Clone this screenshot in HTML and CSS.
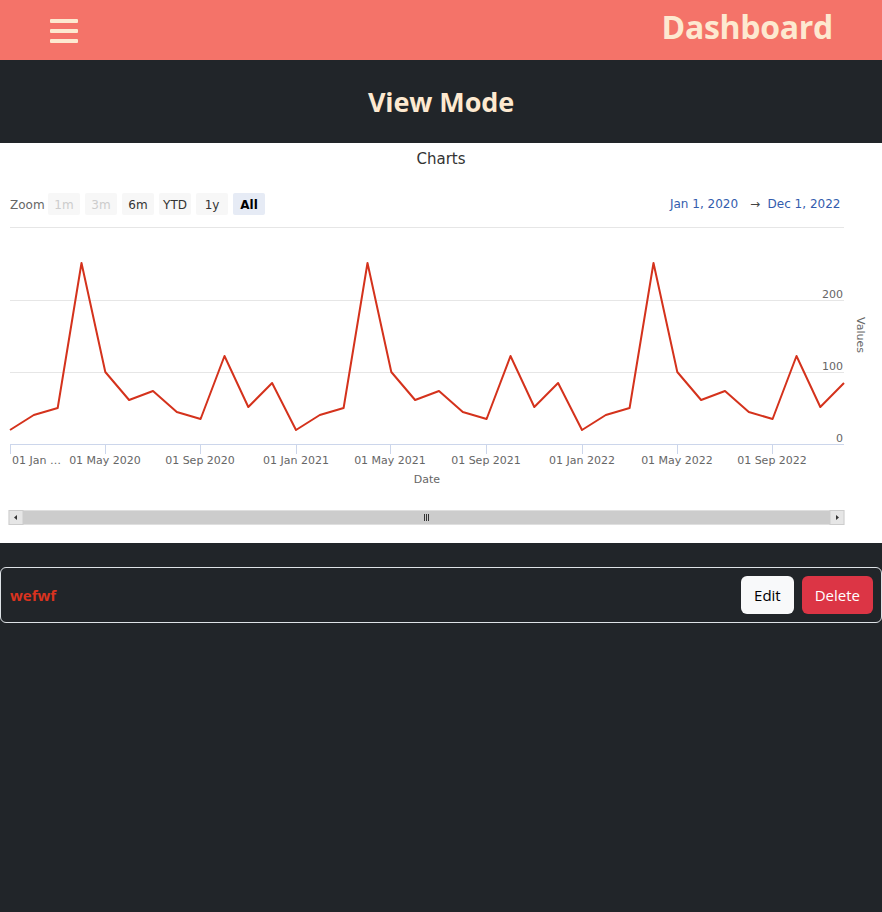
FILE: index.html
```html
<!DOCTYPE html>
<html lang="en">
<head>
<meta charset="utf-8">
<title>Dashboard</title>
<link rel="stylesheet" href="styles.css">
</head>
<body>
<header class="topbar">
  <button class="menu-btn" aria-label="Menu">
    <span class="bar"></span><span class="bar"></span><span class="bar"></span>
  </button>
  <h1 class="brand">Dashboard</h1>
</header>
<section class="mode-band">
  <h2 class="mode-title">View Mode</h2>
</section>
<section class="chart-card">
  <svg class="chart" width="882" height="400" viewBox="0 0 882 400" xmlns="http://www.w3.org/2000/svg">
    <text class="c-title" x="441" y="21" text-anchor="middle">Charts</text>
    <text class="c-zoom" x="10" y="66">Zoom</text>
    <g class="rs-btn disabled"><rect x="48" y="50" width="32" height="22" rx="2"/><text x="64" y="66" text-anchor="middle">1m</text></g>
    <g class="rs-btn disabled"><rect x="85" y="50" width="32" height="22" rx="2"/><text x="101" y="66" text-anchor="middle">3m</text></g>
    <g class="rs-btn"><rect x="122" y="50" width="32" height="22" rx="2"/><text x="138" y="66" text-anchor="middle">6m</text></g>
    <g class="rs-btn"><rect x="159" y="50" width="32" height="22" rx="2"/><text x="175" y="66" text-anchor="middle">YTD</text></g>
    <g class="rs-btn"><rect x="196" y="50" width="32" height="22" rx="2"/><text x="212" y="66" text-anchor="middle">1y</text></g>
    <g class="rs-btn active"><rect x="233" y="50" width="32" height="22" rx="2"/><text x="249" y="66" text-anchor="middle">All</text></g>
    <text class="c-date" x="704" y="65" text-anchor="middle">Jan 1, 2020</text>
    <text class="c-arrow" x="755" y="65" text-anchor="middle">→</text>
    <text class="c-date" x="804" y="65" text-anchor="middle">Dec 1, 2022</text>
    <g class="grid">
      <line x1="10" y1="84.5" x2="844" y2="84.5"/>
      <line x1="10" y1="157.5" x2="844" y2="157.5"/>
      <line x1="10" y1="229.5" x2="844" y2="229.5"/>
    </g>
    <g class="axis">
      <line x1="10" y1="301.5" x2="844" y2="301.5"/>
      <line x1="10.5" y1="301" x2="10.5" y2="311"/>
      <line x1="105.5" y1="301" x2="105.5" y2="311"/>
      <line x1="200.5" y1="301" x2="200.5" y2="311"/>
      <line x1="296.5" y1="301" x2="296.5" y2="311"/>
      <line x1="390.5" y1="301" x2="390.5" y2="311"/>
      <line x1="486.5" y1="301" x2="486.5" y2="311"/>
      <line x1="582.5" y1="301" x2="582.5" y2="311"/>
      <line x1="677.5" y1="301" x2="677.5" y2="311"/>
      <line x1="772.5" y1="301" x2="772.5" y2="311"/>
    </g>
    <g class="x-labels">
      <text x="12" y="321">01 Jan …</text>
      <text x="105" y="321" text-anchor="middle">01 May 2020</text>
      <text x="200" y="321" text-anchor="middle">01 Sep 2020</text>
      <text x="296" y="321" text-anchor="middle">01 Jan 2021</text>
      <text x="390" y="321" text-anchor="middle">01 May 2021</text>
      <text x="486" y="321" text-anchor="middle">01 Sep 2021</text>
      <text x="582" y="321" text-anchor="middle">01 Jan 2022</text>
      <text x="677" y="321" text-anchor="middle">01 May 2022</text>
      <text x="772" y="321" text-anchor="middle">01 Sep 2022</text>
    </g>
    <text class="axis-title" x="427" y="340" text-anchor="middle">Date</text>
    <g class="y-labels">
      <text x="843" y="155" text-anchor="end">200</text>
      <text x="843" y="227" text-anchor="end">100</text>
      <text x="843" y="299" text-anchor="end">0</text>
    </g>
    <text class="axis-title" x="0" y="0" text-anchor="middle" transform="translate(857 192) rotate(90)">Values</text>
    <polyline class="series" points="10,287 33.8,272 57.7,265 81.5,120 105.3,229 129.1,257 153,248 176.8,269 200.6,276 224.5,213 248.3,264 272.1,240 296,287 319.8,272 343.6,265 367.5,120 391.3,229 415.1,257 439,248 462.8,269 486.6,276 510.5,213 534.3,264 558.1,240 582,287 605.8,272 629.6,265 653.5,120 677.3,229 701.1,257 725,248 748.8,269 772.6,276 796.5,213 820.3,264 844,240"/>
    <g class="scrollbar">
      <rect class="track" x="9" y="367.5" width="835" height="14"/>
      <rect class="thumb" x="23" y="367.5" width="807" height="14"/>
      <rect class="sb-btn" x="9" y="367.5" width="14" height="14"/>
      <rect class="sb-btn" x="830" y="367.5" width="14" height="14"/>
      <path class="sb-arrow" d="M17 372 L14 374.5 L17 377 Z"/>
      <path class="sb-arrow" d="M836 372 L839 374.5 L836 377 Z"/>
      <path class="grip" d="M424.5 371 V378 M426.5 371 V378 M428.5 371 V378"/>
    </g>
  </svg>
</section>
<section class="item-card">
  <span class="item-name">wefwf</span>
  <div class="item-actions">
    <button class="btn btn-light">Edit</button>
    <button class="btn btn-danger">Delete</button>
  </div>
</section>
</body>
</html>
```
FILE: styles.css
```css
* { box-sizing: border-box; }
html, body { margin: 0; padding: 0; }
body {
  background: #212529;
  min-height: 912px;
  font-family: "Open Sans", "Noto Sans", "Liberation Sans", sans-serif;
}
.topbar {
  height: 60px;
  background: #f47369;
  display: flex;
  align-items: center;
  justify-content: space-between;
  padding: 0 49px 0 50px;
}
.menu-btn {
  background: none;
  border: 0;
  padding: 0;
  width: 28px;
  display: flex;
  flex-direction: column;
  gap: 6px;
  margin-top: 2px;
}
.menu-btn .bar {
  display: block;
  width: 28px;
  height: 4px;
  border-radius: 1px;
  background: #fde9d0;
}
.brand {
  margin: 0;
  font-size: 32px;
  font-weight: 700;
  color: #fde9d0;
  line-height: 1;
  margin-top: -6px;
  letter-spacing: -0.3px;
}
.mode-band {
  height: 83px;
  display: flex;
  align-items: center;
  justify-content: center;
}
.mode-title {
  margin: 0;
  font-size: 27px;
  font-weight: 700;
  color: #fde9d0;
  letter-spacing: -0.1px;
}
.chart-card {
  background: #fff;
  height: 400px;
}
.chart { display: block; }
.chart text { font-family: "DejaVu Sans", Verdana, sans-serif; }
.c-title { font-size: 15px; fill: #333; }
.c-zoom { font-size: 12px; fill: #666; }
.rs-btn rect { fill: #f7f7f7; }
.rs-btn text { font-size: 12px; fill: #333; }
.rs-btn.disabled text { fill: #ccc; }
.rs-btn.active rect { fill: #e6ebf5; }
.rs-btn.active text { fill: #000; font-weight: 700; }
.c-date { font-size: 12px; fill: #335cad; }
.c-arrow { font-size: 12px; fill: #444; }
.grid line { stroke: #e6e6e6; stroke-width: 1; }
.axis line { stroke: #ccd6eb; stroke-width: 1; }
.x-labels text, .y-labels text { font-size: 11px; fill: #666; }
.axis-title { font-size: 11px; fill: #666; }
.series { fill: none; stroke: #d4321c; stroke-width: 2; stroke-linejoin: round; }
.scrollbar .track { fill: #f2f2f2; stroke: #f2f2f2; }
.scrollbar .thumb { fill: #cccccc; }
.scrollbar .sb-btn { fill: #e6e6e6; stroke: #cccccc; stroke-width: 1; }
.scrollbar .sb-arrow { fill: #333; }
.scrollbar .grip { stroke: #333; stroke-width: 1; }
.item-card {
  margin-top: 24px;
  border: 1px solid #dee2e6;
  border-radius: 6px;
  padding: 8px 8px 8px 9px;
  display: flex;
  align-items: center;
  justify-content: space-between;
}
.item-name {
  color: #d9331f;
  font-weight: 700;
  font-size: 15px;
}
.item-actions { display: flex; gap: 8px; }
.btn {
  font-family: "Open Sans", "Noto Sans", sans-serif;
  font-size: 15px;
  height: 38px;
  padding: 0 12px;
  border-radius: 6px;
  border: 1px solid transparent;
}
.btn-light { background: #f8f9fa; color: #000; }
.btn-danger { background: #dc3545; color: #fff; }
```
